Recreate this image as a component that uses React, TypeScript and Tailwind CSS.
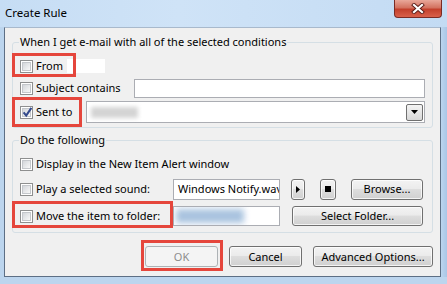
import type { ReactNode } from 'react';

const font = "font-['Segoe_UI','Noto_Sans',sans-serif]";

function CheckBox({ checked = false }: { checked?: boolean }) {
  return (
    <span className="flex h-[13px] w-[13px] shrink-0 border border-[#8e8f8f] bg-white p-[1px]">
      <span className="relative flex h-full w-full border border-[#c4c7cb] bg-[linear-gradient(135deg,#d3d6da,#f8f8f8)]">
        {checked && (
          <svg viewBox="0 0 11 11" className="absolute -left-[1px] -top-[2px] h-[11px] w-[11px] overflow-visible">
            <path d="M1.6 5.4 L4.2 8.6 L9.4 0.8" fill="none" stroke="#344a8c" strokeWidth="2.1" />
          </svg>
        )}
      </span>
    </span>
  );
}

function Button({ children, className = '' }: { children?: ReactNode; className?: string }) {
  return (
    <div
      className={`flex shrink-0 items-center justify-center rounded-[3px] border border-[#707070] bg-[linear-gradient(#f3f3f3,#ebebeb_45%,#dddddd_50%,#d0d0d0)] shadow-[inset_0_0_0_1px_rgba(255,255,255,0.75)] ${className}`}
    >
      {children}
    </div>
  );
}

// red annotation frame drawn over the dialog
function Mark({ className }: { className: string }) {
  return <span className={`pointer-events-none absolute border-[3px] border-[#e5463c] ${className}`} />;
}

export default function App() {
  return (
    <div className={`flex h-[284px] w-[447px] flex-col overflow-hidden bg-[#bcd5ee] text-[11px] leading-[16px] text-black ${font}`}>
      {/* title bar */}
      <div className="flex h-[27px] shrink-0 items-start bg-[linear-gradient(90deg,#c6ddf4,#cfe3f7_40%,#c3dbf3)]">
        <span className="ml-[5px] mt-[4px] text-[11.5px] leading-[17px]">Create Rule</span>
        <div className="ml-auto mr-[5px] flex h-[18px] w-[48px] items-center justify-center rounded-b-[4px] border border-t-0 border-[#7a2b24] bg-[linear-gradient(#e9a89a,#d37260_45%,#c3402c_55%,#d9604a)]">
          <svg width="14" height="11" viewBox="0 0 14 11">
            <path d="M3 2 L11 9 M11 2 L3 9" stroke="#5a1d18" strokeWidth="4" strokeLinecap="square" />
            <path d="M3 2 L11 9 M11 2 L3 9" stroke="#ffffff" strokeWidth="2.2" strokeLinecap="square" />
          </svg>
        </div>
      </div>

      <div className="flex h-[250px] shrink-0">
        <div className="w-[4px] shrink-0" />
        <div className="flex w-[437px] shrink-0 flex-col border border-[#5d6f85] border-t-[#a8b9cc] bg-[#f0f0f0] px-[7px]">
          {/* conditions */}
          <fieldset className="mt-[6px] rounded-[3px] border border-[#d5dfe5] px-[7px] pb-[3px]">
            <legend className="-ml-[1px] px-[1px]">When I get e-mail with all of the selected conditions</legend>

            <div className="relative mt-[5px] flex h-[22px] items-center">
              <CheckBox />
              <span className="ml-[3px]">From</span>
              <span className="ml-[4px] h-[14px] w-[38px] bg-white" />
              <Mark className="-left-[8px] -top-[2px] h-[24px] w-[64px]" />
            </div>

            <div className="flex h-[22px] items-center">
              <CheckBox />
              <span className="ml-[3px]">Subject contains</span>
              <div className="ml-auto h-[19px] w-[291px] border border-[#abadb3] bg-white" />
            </div>

            <div className="relative mt-[1px] flex h-[24px] items-center">
              <CheckBox checked />
              <span className="ml-[3px]">Sent to</span>
              <div className="ml-auto flex h-[22px] w-[339px] items-center border border-[#abadb3] bg-white pl-[4px] pr-[1px]">
                <span className="h-[11px] w-[47px] bg-[#d4d4d4] blur-[2px]" />
                <div className="ml-auto flex h-[17px] w-[17px] items-center justify-center rounded-[2px] border border-[#707070] bg-[linear-gradient(#f4f4f4,#d8d8d8)]">
                  <svg width="7" height="4" viewBox="0 0 7 4">
                    <path d="M0 0H7L3.5 4Z" fill="#000" />
                  </svg>
                </div>
              </div>
              <Mark className="-left-[8px] -top-[3px] h-[30px] w-[70px]" />
            </div>
          </fieldset>

          {/* actions */}
          <fieldset className="mt-[4px] rounded-[3px] border border-[#d5dfe5] pb-[3px] pl-[7px] pr-[9px]">
            <legend className="-ml-[1px] px-[1px]">Do the following</legend>

            <div className="mt-[5px] flex h-[22px] items-center">
              <CheckBox />
              <span className="ml-[3px]">Display in the New Item Alert window</span>
            </div>

            <div className="mt-[1px] flex h-[26px] items-center">
              <div className="flex w-[153px] shrink-0 items-center">
                <CheckBox />
                <span className="ml-[3px]">Play a selected sound:</span>
              </div>
              <div className="flex h-[21px] w-[107px] shrink-0 items-center overflow-hidden whitespace-nowrap border border-[#abadb3] bg-white pl-[4px]">
                Windows Notify.wav
              </div>
              <Button className="ml-[11px] h-[21px] w-[14px]">
                <svg width="4" height="7" viewBox="0 0 4 7">
                  <path d="M0 0L4 3.5L0 7Z" fill="#000" />
                </svg>
              </Button>
              <Button className="ml-[15px] h-[21px] w-[16px]">
                <span className="h-[6px] w-[6px] bg-black" />
              </Button>
              <Button className="ml-auto h-[21px] w-[72px]">Browse...</Button>
            </div>

            <div className="relative mt-[1px] flex h-[26px] items-center">
              <div className="flex w-[153px] shrink-0 items-center">
                <CheckBox />
                <span className="ml-[3px]">Move the item to folder:</span>
              </div>
              <div className="flex h-[20px] w-[107px] shrink-0 items-center overflow-hidden border border-[#abadb3] bg-white pl-[2px]">
                <span className="h-[14px] w-[68px] bg-[#a9c3df] blur-[3px]" />
              </div>
              <Button className="ml-auto h-[20px] w-[131px]">Select Folder...</Button>
              <Mark className="-left-[8px] -top-[2px] h-[27px] w-[161px]" />
            </div>
          </fieldset>

          {/* dialog buttons */}
          <div className="mt-[13px] flex justify-end gap-[11px]">
            <div className="relative">
              <div className="flex h-[21px] w-[73px] items-center justify-center rounded-[3px] border border-[#adb2b5] bg-[#f4f4f4] text-[#8d8d8d]">
                OK
              </div>
              <Mark className="-left-[4px] -top-[6px] h-[31px] w-[82px]" />
            </div>
            <Button className="h-[21px] w-[73px]">Cancel</Button>
            <Button className="h-[21px] w-[120px]">Advanced Options...</Button>
          </div>
        </div>
        <div className="w-[6px] shrink-0 bg-[linear-gradient(90deg,#bcd5ee,#a9c6e6)]" />
      </div>
      <div className="h-[7px] shrink-0" />
    </div>
  );
}
